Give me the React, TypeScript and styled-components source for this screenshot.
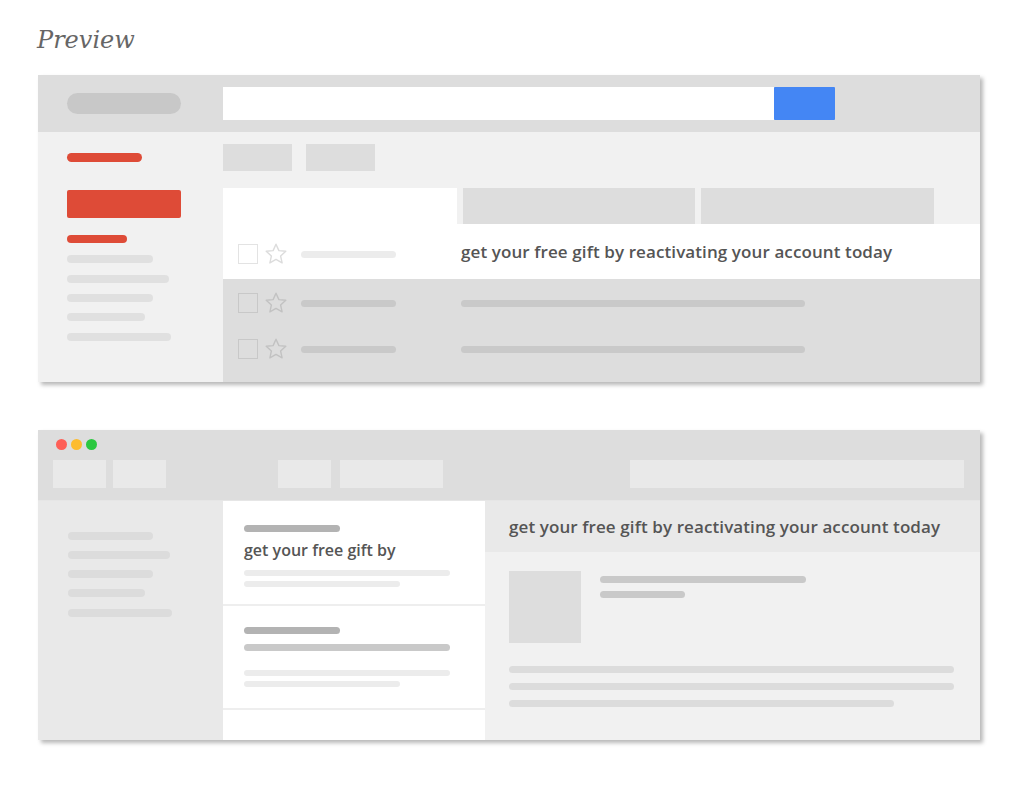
import styled, { createGlobalStyle } from "styled-components";

const GlobalStyle = createGlobalStyle`
  html, body {
    margin: 0;
    padding: 0;
    background: #ffffff;
  }
  body {
    font-family: "Open Sans", "Liberation Sans", sans-serif;
  }
`;

const Page = styled.div`
  width: 1024px;
  height: 785px;
  padding: 24px 0 0 38px;
  box-sizing: border-box;
  display: flex;
  flex-direction: column;
`;

const Title = styled.h1`
  margin: 0 0 0 -1px;
  height: 51px;
  font-family: "DejaVu Serif", "Liberation Serif", serif;
  font-style: italic;
  font-weight: 400;
  font-size: 24px;
  line-height: 32px;
  color: #666666;
`;

const Window = styled.div<{ $h: number; $gap?: number }>`
  width: 942px;
  height: ${(p) => p.$h}px;
  margin-bottom: ${(p) => p.$gap ?? 0}px;
  display: flex;
  flex-direction: column;
  background: #f1f1f1;
  box-shadow: 3px 3px 4px rgba(0, 0, 0, 0.28);
  overflow: hidden;
`;

/* ---------- mock 1 ---------- */

const Header1 = styled.div`
  height: 57px;
  flex-shrink: 0;
  background: #dddddd;
  display: flex;
  align-items: center;
`;

const LogoSlot = styled.div`
  width: 185px;
  padding-left: 29px;
  box-sizing: border-box;
  display: flex;
  align-items: center;
`;

const Pill = styled.div`
  width: 114px;
  height: 21px;
  border-radius: 11px;
  background: #c8c8c8;
`;

const SearchInput = styled.div`
  width: 551px;
  height: 33px;
  background: #ffffff;
`;

const SearchButton = styled.div`
  width: 61px;
  height: 33px;
  border-radius: 1px;
  background: #4486f4;
`;

const Body = styled.div`
  flex: 1;
  display: flex;
  min-height: 0;
`;

const Sidebar = styled.div<{ $bg: string; $top: number; $left: number }>`
  width: 185px;
  flex-shrink: 0;
  background: ${(p) => p.$bg};
  padding: ${(p) => p.$top}px 0 0 ${(p) => p.$left}px;
  box-sizing: border-box;
  display: flex;
  flex-direction: column;
  align-items: flex-start;
`;

const Bar = styled.div<{ $w: number; $h?: number; $c: string; $mb?: number; $mt?: number }>`
  width: ${(p) => p.$w}px;
  height: ${(p) => p.$h ?? 8}px;
  margin-top: ${(p) => p.$mt ?? 0}px;
  margin-bottom: ${(p) => p.$mb ?? 0}px;
  border-radius: 5px;
  background: ${(p) => p.$c};
  flex-shrink: 0;
`;

const ComposeButton = styled.div`
  width: 114px;
  height: 28px;
  border-radius: 2px;
  background: #de4b37;
  margin: 28px 0 17px;
`;

const Main = styled.div`
  flex: 1;
  display: flex;
  flex-direction: column;
`;

const Toolbar = styled.div`
  display: flex;
  gap: 14px;
  padding-top: 12px;
`;

const ToolButton = styled.div`
  width: 69px;
  height: 27px;
  background: #dddddd;
`;

const Tabs = styled.div`
  display: flex;
  gap: 6px;
  margin-top: 17px;
`;

const Tab = styled.div<{ $w: number; $active?: boolean }>`
  width: ${(p) => p.$w}px;
  height: 36px;
  background: ${(p) => (p.$active ? "#ffffff" : "#dddddd")};
`;

const MailList = styled.div`
  flex: 1;
  background: #dddddd;
  display: flex;
  flex-direction: column;
`;

const MailRow = styled.div<{ $h: number; $open?: boolean }>`
  height: ${(p) => p.$h}px;
  display: flex;
  align-items: center;
  background: ${(p) => (p.$open ? "#ffffff" : "transparent")};
`;

const SenderCell = styled.div<{ $dy?: number }>`
  width: 238px;
  padding: ${(p) => p.$dy ?? 0}px 0 0 15px;
  box-sizing: border-box;
  display: flex;
  align-items: center;
`;

const CheckBox = styled.div<{ $c: string }>`
  width: 20px;
  height: 20px;
  box-sizing: border-box;
  border: 1.5px solid ${(p) => p.$c};
  margin-right: 6px;
`;

const StarIcon = styled.svg`
  width: 24px;
  height: 24px;
  margin-right: 13px;
`;

const Subject = styled.div<{ $size?: number }>`
  font-family: "Open Sans", "Liberation Sans", sans-serif;
  font-weight: 600;
  font-size: ${(p) => p.$size ?? 17}px;
  letter-spacing: 0.1px;
  color: #555555;
  white-space: nowrap;
`;

const Star = ({ c }: { c: string }) => (
  <StarIcon viewBox="0 0 24 24">
    <path
      d="M12 2.2l2.9 6.4 6.9.7-5.2 4.7 1.5 6.9L12 17.4l-6.1 3.5 1.5-6.9-5.2-4.7 6.9-.7z"
      fill="none"
      stroke={c}
      strokeWidth="1.4"
      strokeLinejoin="round"
    />
  </StarIcon>
);

/* ---------- mock 2 ---------- */

const Header2 = styled.div`
  height: 71px;
  flex-shrink: 0;
  background: #dddddd;
  padding: 9px 16px 0 15px;
  box-sizing: border-box;
  border-bottom: 1px solid #e6e6e6;
`;

const Lights = styled.div`
  display: flex;
  gap: 4px;
  padding-left: 3px;
`;

const Light = styled.div<{ $c: string }>`
  width: 11px;
  height: 11px;
  border-radius: 50%;
  background: ${(p) => p.$c};
`;

const ChromeRow = styled.div`
  display: flex;
  margin-top: 10px;
`;

const ChromeButton = styled.div<{ $w: number; $ml?: number }>`
  width: ${(p) => p.$w}px;
  height: 28px;
  margin-left: ${(p) => p.$ml ?? 0}px;
  background: #e9e9e9;
`;

const ListColumn = styled.div`
  width: 262px;
  flex-shrink: 0;
  background: #ffffff;
  display: flex;
  flex-direction: column;
  gap: 2px;
`;

const Card = styled.div<{ $h: number; $top?: number }>`
  height: ${(p) => p.$h}px;
  flex-shrink: 0;
  padding: ${(p) => p.$top ?? 24}px 0 0 21px;
  box-sizing: border-box;
  background: #ffffff;
  box-shadow: 0 2px 0 #eeeeee;
  display: flex;
  flex-direction: column;
  align-items: flex-start;
`;

const CardSubject = styled(Subject)`
  font-size: 16px;
  letter-spacing: 0;
  margin: 7px 0 9px;
  line-height: 22px;
`;

const Reader = styled.div`
  flex: 1;
  display: flex;
  flex-direction: column;
`;

const ReaderHeader = styled.div`
  height: 51px;
  background: #e9e9e9;
  padding-left: 24px;
  display: flex;
  align-items: center;
`;

const ReaderBody = styled.div`
  padding: 19px 24px 0;
  display: flex;
  flex-direction: column;
`;

const SenderBlock = styled.div`
  display: flex;
  gap: 19px;
  margin-bottom: 23px;
`;

const Avatar = styled.div`
  width: 72px;
  height: 72px;
  background: #dddddd;
`;

const SenderLines = styled.div`
  display: flex;
  flex-direction: column;
  gap: 8px;
  padding-top: 5px;
`;

const BodyLines = styled.div`
  display: flex;
  flex-direction: column;
  gap: 10px;
`;

const SUBJECT = "get your free gift by reactivating your account today";

export default function App() {
  return (
    <>
      <GlobalStyle />
      <Page>
        <Title>Preview</Title>

        <Window $h={307} $gap={48}>
          <Header1>
            <LogoSlot>
              <Pill />
            </LogoSlot>
            <SearchInput />
            <SearchButton />
          </Header1>
          <Body>
            <Sidebar $bg="#f1f1f1" $top={21} $left={29}>
              <Bar $w={75} $h={9} $c="#de4b37" />
              <ComposeButton />
              <Bar $w={60} $h={8} $c="#de4b37" $mb={12} />
              <Bar $w={86} $c="#e0e0e0" $mb={12} />
              <Bar $w={102} $c="#e0e0e0" $mb={11} />
              <Bar $w={86} $c="#e0e0e0" $mb={11} />
              <Bar $w={78} $c="#e0e0e0" $mb={12} />
              <Bar $w={104} $c="#e0e0e0" />
            </Sidebar>
            <Main>
              <Toolbar>
                <ToolButton />
                <ToolButton />
              </Toolbar>
              <Tabs>
                <Tab $w={234} $active />
                <Tab $w={232} />
                <Tab $w={233} />
              </Tabs>
              <MailList>
                <MailRow $h={55} $open>
                  <SenderCell $dy={5}>
                    <CheckBox $c="#e3e3e3" />
                    <Star c="#dcdcdc" />
                    <Bar $w={95} $h={7} $c="#ececec" />
                  </SenderCell>
                  <Subject>{SUBJECT}</Subject>
                </MailRow>
                <MailRow $h={48}>
                  <SenderCell>
                    <CheckBox $c="#c8c8c8" />
                    <Star c="#c2c2c2" />
                    <Bar $w={95} $h={7} $c="#c9c9c9" />
                  </SenderCell>
                  <Bar $w={344} $h={7} $c="#c9c9c9" />
                </MailRow>
                <MailRow $h={44}>
                  <SenderCell>
                    <CheckBox $c="#c8c8c8" />
                    <Star c="#c2c2c2" />
                    <Bar $w={95} $h={7} $c="#c9c9c9" />
                  </SenderCell>
                  <Bar $w={344} $h={7} $c="#c9c9c9" />
                </MailRow>
              </MailList>
            </Main>
          </Body>
        </Window>

        <Window $h={310}>
          <Header2>
            <Lights>
              <Light $c="#fe5f57" />
              <Light $c="#fdbc2e" />
              <Light $c="#2bc840" />
            </Lights>
            <ChromeRow>
              <ChromeButton $w={53} />
              <ChromeButton $w={53} $ml={7} />
              <ChromeButton $w={53} $ml={112} />
              <ChromeButton $w={103} $ml={9} />
              <ChromeButton $w={334} $ml={187} />
            </ChromeRow>
          </Header2>
          <Body>
            <Sidebar $bg="#e9e9e9" $top={31} $left={30}>
              <Bar $w={85} $c="#dcdcdc" $mb={11} />
              <Bar $w={102} $c="#dcdcdc" $mb={11} />
              <Bar $w={85} $c="#dcdcdc" $mb={11} />
              <Bar $w={77} $c="#dcdcdc" $mb={12} />
              <Bar $w={104} $c="#dcdcdc" />
            </Sidebar>
            <ListColumn>
              <Card $h={103}>
                <Bar $w={96} $h={7} $c="#b3b3b3" />
                <CardSubject>get your free gift by</CardSubject>
                <Bar $w={206} $h={6} $c="#ececec" $mb={5} />
                <Bar $w={156} $h={6} $c="#ececec" />
              </Card>
              <Card $h={102} $top={21}>
                <Bar $w={96} $h={7} $c="#b3b3b3" $mb={10} />
                <Bar $w={206} $h={7} $c="#c9c9c9" $mb={19} />
                <Bar $w={206} $h={6} $c="#ececec" $mb={5} />
                <Bar $w={156} $h={6} $c="#ececec" />
              </Card>
              <Card $h={40} />
            </ListColumn>
            <Reader>
              <ReaderHeader>
                <Subject>{SUBJECT}</Subject>
              </ReaderHeader>
              <ReaderBody>
                <SenderBlock>
                  <Avatar />
                  <SenderLines>
                    <Bar $w={206} $h={7} $c="#c9c9c9" />
                    <Bar $w={85} $h={7} $c="#c9c9c9" />
                  </SenderLines>
                </SenderBlock>
                <BodyLines>
                  <Bar $w={445} $h={7} $c="#dcdcdc" />
                  <Bar $w={445} $h={7} $c="#dcdcdc" />
                  <Bar $w={385} $h={7} $c="#dcdcdc" />
                </BodyLines>
              </ReaderBody>
            </Reader>
          </Body>
        </Window>
      </Page>
    </>
  );
}
